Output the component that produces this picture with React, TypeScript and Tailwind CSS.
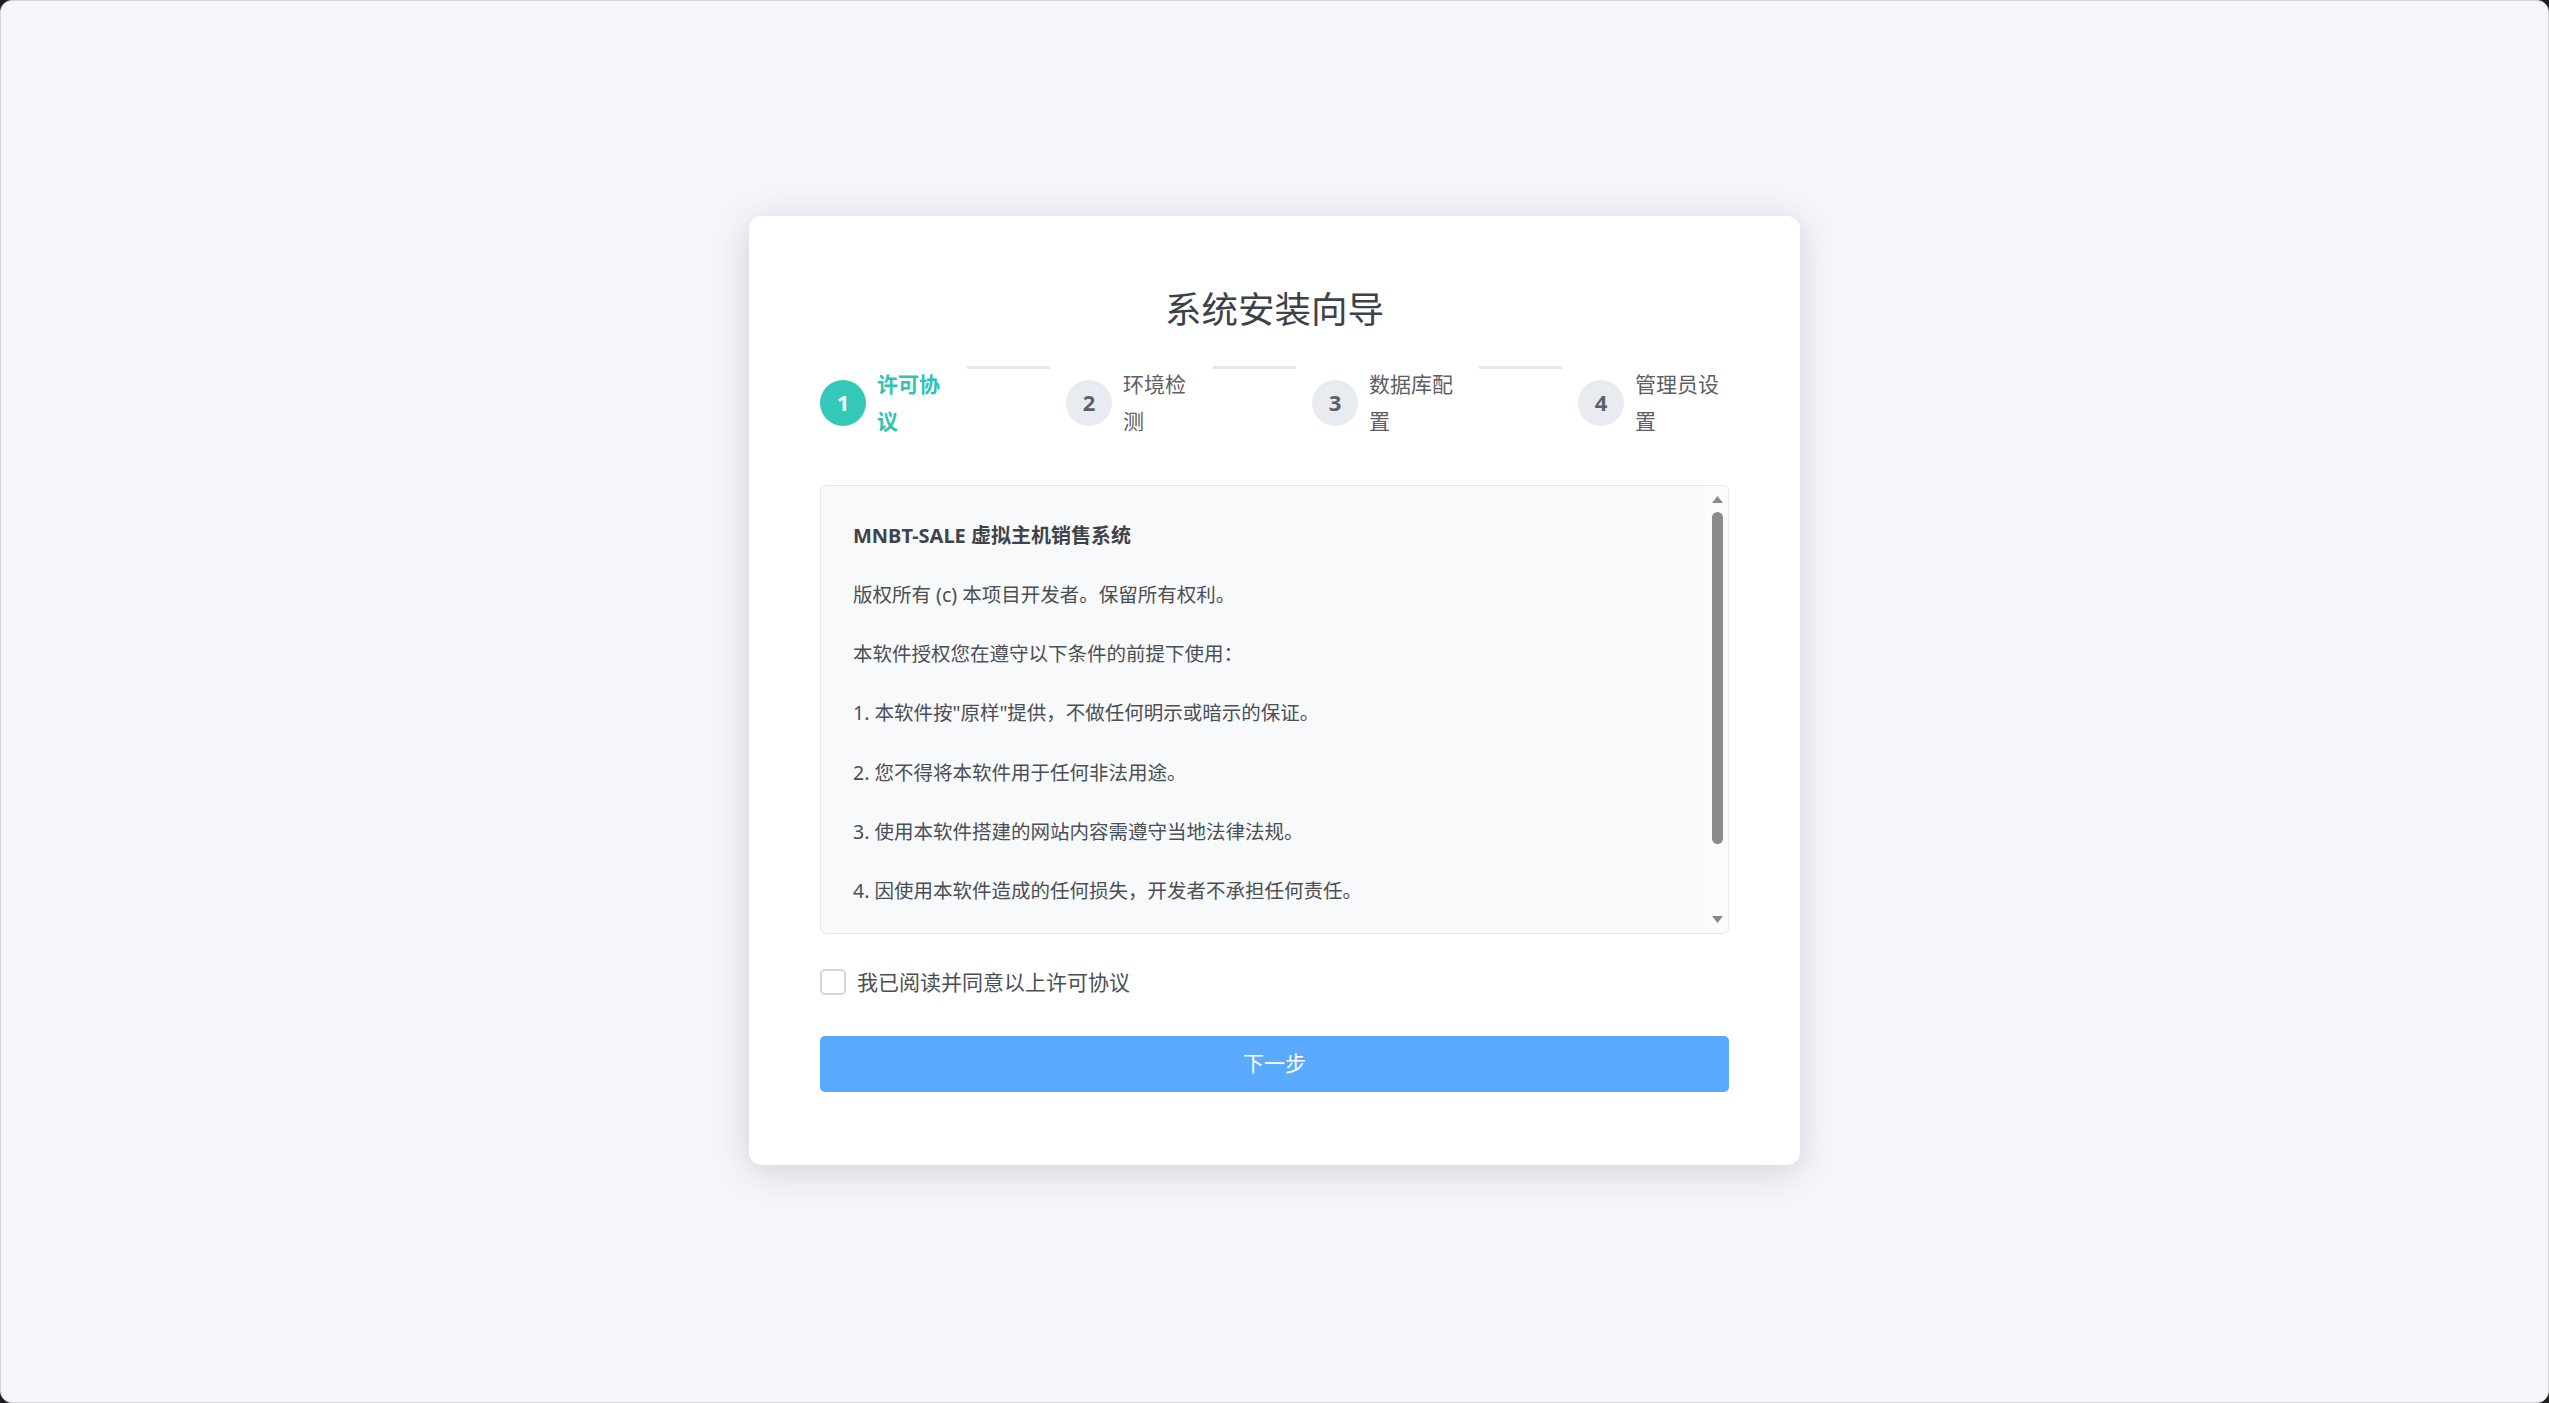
import React, { useState } from "react";

type Step = {
  no: number;
  label: string;
  width: string;
};

const steps: Step[] = [
  { no: 1, label: "许可协议", width: "w-[74px]" },
  { no: 2, label: "环境检测", width: "w-[74px]" },
  { no: 3, label: "数据库配置", width: "w-[94px]" },
  { no: 4, label: "管理员设置", width: "w-[94px]" },
];

const terms = [
  "版权所有 (c) 本项目开发者。保留所有权利。",
  "本软件授权您在遵守以下条件的前提下使用：",
  "1. 本软件按\"原样\"提供，不做任何明示或暗示的保证。",
  "2. 您不得将本软件用于任何非法用途。",
  "3. 使用本软件搭建的网站内容需遵守当地法律法规。",
  "4. 因使用本软件造成的任何损失，开发者不承担任何责任。",
];

function StepItem({ step, active }: { step: Step; active: boolean }) {
  return (
    <div className="flex shrink-0 items-center gap-[11px]">
      <div
        className={
          active
            ? "flex h-[46px] w-[46px] items-center justify-center rounded-full bg-[#34c8b8] text-[22px] font-bold text-white"
            : "flex h-[46px] w-[46px] items-center justify-center rounded-full bg-[#e8ebef] text-[22px] font-bold text-[#5a616b]"
        }
      >
        {step.no}
      </div>
      <span
        className={
          active
            ? `${step.width} text-[21px] leading-[37px] font-bold text-[#2fc4b2]`
            : `${step.width} text-[21px] leading-[37px] text-[#5c6066]`
        }
      >
        {step.label}
      </span>
    </div>
  );
}

function FakeScrollbar() {
  return (
    <div className="absolute top-0 right-0 bottom-0 flex w-[22px] flex-col items-center bg-[#fbfbfb] py-[9px]">
      <svg width="13" height="9" viewBox="0 0 13 9" className="shrink-0">
        <path d="M6.5 1 L12 8 L1 8 Z" fill="#8a8a8a" />
      </svg>
      <div className="mt-[8px] h-[332px] w-[11px] rounded-full bg-[#8b8b8b]" />
      <div className="flex-1" />
      <svg width="13" height="9" viewBox="0 0 13 9" className="shrink-0">
        <path d="M1 1 L12 1 L6.5 8 Z" fill="#8a8a8a" />
      </svg>
    </div>
  );
}

export default function App() {
  const [agreed, setAgreed] = useState(false);

  return (
    <div className="h-screen w-full bg-[#1f1f1f] font-['Noto_Sans','Noto_Sans_CJK_SC',sans-serif]">
      <div className="flex h-full w-full items-center justify-center rounded-[12px] border border-[#d4d6db] bg-[#f4f6fa] pb-[23px]">
        <div className="w-[1051px] rounded-[13px] bg-white px-[71px] pt-[64px] pb-[73px] shadow-[0_6px_34px_rgba(40,44,60,0.18)]">
          <h1 className="text-center text-[36.5px] leading-[58px] text-[#3d4148]">系统安装向导</h1>

          <div className="mt-[28px] flex">
            {steps.map((step, index) => (
              <React.Fragment key={step.no}>
                <StepItem step={step} active={index === 0} />
                {index < steps.length - 1 && (
                  <div className="mx-[16px] h-[3px] flex-1 self-start bg-[#e4e7ed]" />
                )}
              </React.Fragment>
            ))}
          </div>

          <div className="relative mt-[45px] h-[449px] overflow-hidden rounded-[6px] border border-[#e6e8eb] bg-[#f8f9fa]">
            <div className="px-[32px] pt-[32px] pr-[40px] text-[19.5px] leading-[36.5px] text-[#4a4f55]">
              <p className="text-[20px] font-bold text-[#3f444a]">MNBT-SALE 虚拟主机销售系统</p>
              {terms.map((line) => (
                <p key={line} className="mt-[22.75px]">
                  {line}
                </p>
              ))}
            </div>
            <FakeScrollbar />
          </div>

          <label className="mt-[30px] flex cursor-pointer items-center gap-[11px]">
            <input
              type="checkbox"
              checked={agreed}
              onChange={(event) => setAgreed(event.target.checked)}
              className="h-[26px] w-[26px] appearance-none rounded-[5px] border-2 border-[#d3d6db] bg-white checked:bg-[#34c8b8]"
            />
            <span className="text-[21px] leading-[37px] text-[#4a4f55]">我已阅读并同意以上许可协议</span>
          </label>

          <button
            type="button"
            className="mt-[35px] h-[56px] w-full rounded-[5px] bg-[#5aaaff] text-[21px] text-white"
          >
            下一步
          </button>
        </div>
      </div>
    </div>
  );
}
